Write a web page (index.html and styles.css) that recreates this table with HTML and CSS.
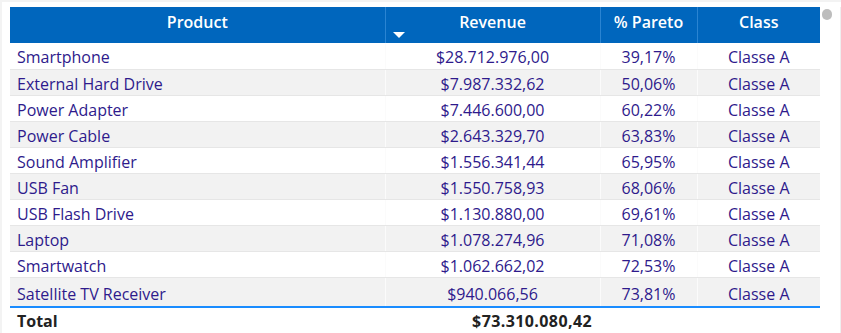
FILE: index.html
```html
<!DOCTYPE html>
<html lang="en">
<head>
    <meta charset="UTF-8">
    <title>Pareto by Product</title>
    <link rel="stylesheet" href="styles.css">
</head>
<body>
    <div class="visual">
        <div class="table-wrap">
            <table class="pareto">
                <colgroup>
                    <col class="col-product">
                    <col class="col-revenue">
                    <col class="col-pareto">
                    <col class="col-class">
                </colgroup>
                <thead>
                    <tr>
                        <th>Product</th>
                        <th class="sorted">Revenue<span class="sort-arrow"></span></th>
                        <th>% Pareto</th>
                        <th>Class</th>
                    </tr>
                </thead>
                <tbody>
                    <tr><td>Smartphone</td><td>$28.712.976,00</td><td>39,17%</td><td>Classe A</td></tr>
                    <tr><td>External Hard Drive</td><td>$7.987.332,62</td><td>50,06%</td><td>Classe A</td></tr>
                    <tr><td>Power Adapter</td><td>$7.446.600,00</td><td>60,22%</td><td>Classe A</td></tr>
                    <tr><td>Power Cable</td><td>$2.643.329,70</td><td>63,83%</td><td>Classe A</td></tr>
                    <tr><td>Sound Amplifier</td><td>$1.556.341,44</td><td>65,95%</td><td>Classe A</td></tr>
                    <tr><td>USB Fan</td><td>$1.550.758,93</td><td>68,06%</td><td>Classe A</td></tr>
                    <tr><td>USB Flash Drive</td><td>$1.130.880,00</td><td>69,61%</td><td>Classe A</td></tr>
                    <tr><td>Laptop</td><td>$1.078.274,96</td><td>71,08%</td><td>Classe A</td></tr>
                    <tr><td>Smartwatch</td><td>$1.062.662,02</td><td>72,53%</td><td>Classe A</td></tr>
                    <tr><td>Satellite TV Receiver</td><td>$940.066,56</td><td>73,81%</td><td>Classe A</td></tr>
                </tbody>
                <tfoot>
                    <tr>
                        <td>Total</td>
                        <td class="total-value">$73.310.080,42</td>
                        <td></td>
                        <td></td>
                    </tr>
                </tfoot>
            </table>
            <div class="scroll-thumb"></div>
        </div>
    </div>
</body>
</html>
```

FILE: styles.css
```css
body {
    margin: 0;
    background-color: #ffffff;
    font-family: 'Open Sans', 'Noto Sans', sans-serif;
}
.visual {
    height: 333px;
    border-top: 2px solid #f3f3f3;
    border-left: 2px solid #f3f3f3;
    box-sizing: border-box;
    padding: 5px 0 0 8px;
    background-color: #fff;
}
.table-wrap {
    position: relative;
    display: flex;
    width: 830px;
    border-right: 1px solid #efefef;
    height: 100%;
}
.pareto {
    border-collapse: collapse;
    table-layout: fixed;
    width: 810px;
    font-size: 16px;
    color: #2e1a8c;
}
.col-product { width: 375px; }
.col-revenue { width: 215px; }
.col-pareto { width: 97px; }
.col-class { width: 123px; }

thead th {
    background-color: #0066bd;
    color: #fff;
    font-weight: 600;
    font-size: 16px;
    height: 36px;
    padding: 3px 0 9px 0;
    box-sizing: border-box;
    text-align: center;
    border-left: 1px solid #2a84d2;
    position: relative;
    line-height: 22px;
}
thead th:first-child {
    border-left: none;
}
.sort-arrow {
    position: absolute;
    left: 7px;
    bottom: 5px;
    width: 0;
    height: 0;
    border-left: 6px solid transparent;
    border-right: 6px solid transparent;
    border-top: 6px solid #fff;
}
tbody td {
    height: 26px;
    padding: 3px 0 0 0;
    text-align: center;
    border-bottom: 1px solid #e6e6e6;
    border-left: 1px solid #fbfbfb;
    box-sizing: border-box;
    white-space: nowrap;
    line-height: 22px;
}
tbody td:first-child {
    text-align: left;
    padding-left: 7px;
    border-left: none;
}
tbody tr:nth-child(even) td {
    background-color: #f2f2f2;
}
tbody tr:last-child td {
    height: 30px;
    padding-top: 4px;
    border-bottom: 2px solid #1a8cff;
}
tfoot td {
    height: 26px;
    padding: 0;
    font-weight: 700;
    color: #222;
    font-size: 16px;
}
tfoot td:first-child {
    padding-left: 7px;
}
.total-value {
    text-align: right;
    padding-right: 8px !important;
    letter-spacing: 0.4px;
}
.scroll-thumb {
    position: absolute;
    left: 812px;
    top: 2px;
    width: 10px;
    height: 11px;
    border-radius: 5px;
    background-color: #bdbdbd;
}
```
